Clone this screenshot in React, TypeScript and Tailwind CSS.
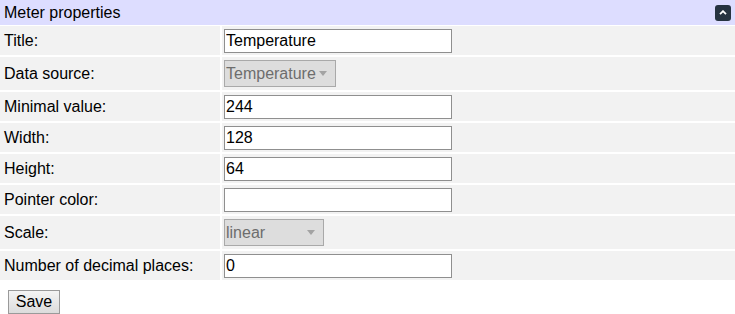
import React from 'react'

const font = { fontFamily: '"Liberation Sans", Arial, sans-serif' }

function TextInput({ value }: { value: string }) {
  return (
    <input
      type="text"
      defaultValue={value}
      className="h-[24px] w-[228px] border border-[#8f8f8f] bg-white px-[1px] text-[16px] text-black outline-none"
      style={font}
    />
  )
}

function FakeSelect({ value, width }: { value: string; width: string }) {
  return (
    <div
      className={`flex h-[27px] items-center justify-between border border-[#a9a9a9] bg-[#dddddd] pl-[1px] pr-[8px] text-[16px] text-[#6d6d6d] ${width}`}
    >
      <span>{value}</span>
      <svg width="8" height="5" viewBox="0 0 8 5">
        <path d="M0 0 L8 0 L4 5 Z" fill="#a3a3a3" />
      </svg>
    </div>
  )
}

const rows: { label: string; kind: 'input' | 'select'; value: string; width?: string }[] = [
  { label: 'Title:', kind: 'input', value: 'Temperature' },
  { label: 'Data source:', kind: 'select', value: 'Temperature', width: 'w-[112px]' },
  { label: 'Minimal value:', kind: 'input', value: '244' },
  { label: 'Width:', kind: 'input', value: '128' },
  { label: 'Height:', kind: 'input', value: '64' },
  { label: 'Pointer color:', kind: 'input', value: '' },
  { label: 'Scale:', kind: 'select', value: 'linear', width: 'w-[100px]' },
  { label: 'Number of decimal places:', kind: 'input', value: '0' },
]

export default function App() {
  return (
    <div className="h-[314px] w-[735px] bg-white text-[16px] text-black" style={font}>
      <div className="flex h-[25px] items-center justify-between bg-[#ddddff] pl-[4px] pr-[4px]">
        <span>Meter properties</span>
        <div className="flex h-[16px] w-[16px] items-center justify-center rounded-[3px] bg-[#263340]">
          <svg width="8" height="5" viewBox="0 0 8 5">
            <path d="M1 4.2 L4 1.2 L7 4.2" fill="none" stroke="white" strokeWidth="1.8" />
          </svg>
        </div>
      </div>

      <div className="mt-[1px] flex flex-col gap-[2px]">
        {rows.map((r) => (
          <div
            key={r.label}
            className={`grid grid-cols-[220px_1fr] gap-[2px] ${r.kind === 'select' ? 'h-[33px]' : 'h-[29px]'}`}
          >
            <div className="flex items-center bg-[#f2f2f2] pl-[4px]">{r.label}</div>
            <div className="flex items-center bg-[#f2f2f2] pl-[2px]">
              {r.kind === 'input' ? (
                <TextInput value={r.value} />
              ) : (
                <FakeSelect value={r.value} width={r.width ?? ''} />
              )}
            </div>
          </div>
        ))}
      </div>

      <div className="pl-[8px] pt-[10px]">
        <button
          className="h-[24px] w-[52px] border border-[#9a9a9a] bg-gradient-to-b from-[#f4f4f4] to-[#dcdcdc] p-0 text-[16px] leading-none text-black"
          style={font}
        >
          Save
        </button>
      </div>
    </div>
  )
}
